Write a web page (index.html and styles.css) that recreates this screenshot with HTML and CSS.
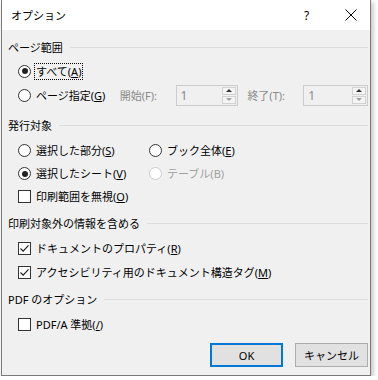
FILE: index.html
```html
<!DOCTYPE html>
<html lang="ja">

<head>
    <meta charset="UTF-8">
    <meta name="viewport" content="width=device-width, initial-scale=1.0">
    <title>オプション</title>
    <link rel="stylesheet" href="styles.css">
</head>

<body>
    <div class="dialog">
        <div class="titlebar">
            <span class="title">オプション</span>
            <span class="help">?</span>
            <span class="close">
                <svg width="12" height="12" viewBox="0 0 12 12">
                    <path d="M0.5 0.5 L11.5 11.5 M11.5 0.5 L0.5 11.5" stroke="#000" stroke-width="1" fill="none" />
                </svg>
            </span>
        </div>

        <div class="content">
            <!-- ページ範囲 -->
            <div class="legend">ページ範囲</div>
            <div class="group group-range">
                <div class="row">
                    <span class="radio checked"></span>
                    <span class="label focus">すべて(<u>A</u>)</span>
                </div>
                <div class="row">
                    <span class="radio"></span>
                    <span class="label pages">ページ指定(<u>G</u>)</span>
                    <span class="field-label">開始(F):</span>
                    <div class="spin">
                        <span class="spin-value">1</span>
                        <div class="spin-btns">
                            <span class="spin-up"></span>
                            <span class="spin-down"></span>
                        </div>
                    </div>
                    <span class="field-label to">終了(T):</span>
                    <div class="spin spin-last">
                        <span class="spin-value">1</span>
                        <div class="spin-btns">
                            <span class="spin-up"></span>
                            <span class="spin-down"></span>
                        </div>
                    </div>
                </div>
            </div>

            <!-- 発行対象 -->
            <div class="legend legend-2">発行対象</div>
            <div class="group group-target">
                <div class="row">
                    <div class="col">
                        <span class="radio"></span>
                        <span class="label">選択した部分(<u>S</u>)</span>
                    </div>
                    <div class="col">
                        <span class="radio"></span>
                        <span class="label">ブック全体(<u>E</u>)</span>
                    </div>
                </div>
                <div class="row">
                    <div class="col">
                        <span class="radio checked"></span>
                        <span class="label">選択したシート(<u>V</u>)</span>
                    </div>
                    <div class="col">
                        <span class="radio disabled"></span>
                        <span class="label disabled-text">テーブル(B)</span>
                    </div>
                </div>
                <div class="row">
                    <span class="check"></span>
                    <span class="label">印刷範囲を無視(<u>O</u>)</span>
                </div>
            </div>

            <!-- 印刷対象外の情報を含める -->
            <div class="legend legend-3">印刷対象外の情報を含める</div>
            <div class="group group-info">
                <div class="row">
                    <span class="check checked">
                        <svg width="11" height="11" viewBox="0 0 11 11">
                            <path d="M1.5 5.5 L4.2 8.2 L9.5 2.3" stroke="#222" stroke-width="1.2" fill="none" />
                        </svg>
                    </span>
                    <span class="label">ドキュメントのプロパティ(<u>R</u>)</span>
                </div>
                <div class="row">
                    <span class="check checked">
                        <svg width="11" height="11" viewBox="0 0 11 11">
                            <path d="M1.5 5.5 L4.2 8.2 L9.5 2.3" stroke="#222" stroke-width="1.2" fill="none" />
                        </svg>
                    </span>
                    <span class="label">アクセシビリティ用のドキュメント構造タグ(<u>M</u>)</span>
                </div>
            </div>

            <!-- PDF のオプション -->
            <div class="legend legend-4">PDF のオプション</div>
            <div class="group group-pdf">
                <div class="row">
                    <span class="check"></span>
                    <span class="label">PDF/A 準拠(<u>/</u>)</span>
                </div>
            </div>

            <div class="buttons">
                <button class="btn btn-default">OK</button>
                <button class="btn">キャンセル</button>
            </div>
        </div>
    </div>
</body>

</html>
```

FILE: styles.css
```css
body {
    margin: 0;
    background: #ffffff;
    font-family: "Noto Sans", "Noto Sans CJK JP", sans-serif;
    font-size: 11px;
    color: #000;
}

.dialog {
    width: 368px;
    height: 375px;
    margin-left: 1px;
    border: 1px solid #7a7a7a;
    border-top: none;
    background: #f0f0f0;
    box-shadow: 2px 2px 5px rgba(0, 0, 0, 0.25);
    display: flex;
    flex-direction: column;
}

.titlebar {
    height: 30px;
    background: #fff;
    display: flex;
    align-items: center;
    padding-left: 9px;
}

.title {
    font-size: 11px;
    flex: 1;
}

.help {
    width: 14px;
    font-size: 12px;
    margin-right: 27px;
}

.close {
    width: 12px;
    height: 12px;
    margin-right: 13px;
    display: flex;
}

.content {
    padding: 7px 2px 0 6px;
}

.legend {
    height: 20px;
    display: flex;
    align-items: center;
    white-space: nowrap;
}

.legend::after {
    content: '';
    flex: 1;
    height: 1px;
    background: #dcdcdc;
    margin-left: 7px;
}

.legend-2 {
    margin-top: 8px;
}

.legend-3 {
    margin-top: 5px;
}

.legend-4 {
    margin-top: 5px;
}

.group {
    padding-left: 9px;
}

.group-range {
    margin-top: 2px;
}

.group-target {
    margin-top: 4px;
}

.group-info,
.group-pdf {
    margin-top: 3px;
}

.row {
    height: 24px;
    display: flex;
    align-items: center;
    white-space: nowrap;
}

.group-target .row {
    height: 23px;
}

.col {
    display: flex;
    align-items: center;
    width: 131px;
}

.radio {
    width: 11px;
    height: 11px;
    border: 1px solid #333;
    border-radius: 50%;
    background: #fff;
    position: relative;
    flex-shrink: 0;
    margin-left: 1px;
}

.radio.checked::after {
    content: '';
    position: absolute;
    left: 2.5px;
    top: 2.5px;
    width: 6px;
    height: 6px;
    border-radius: 50%;
    background: #222;
}

.radio.disabled {
    border-color: #cccccc;
}

.check {
    width: 11px;
    height: 11px;
    border: 1px solid #333;
    background: #fff;
    flex-shrink: 0;
    display: flex;
    margin-left: 1px;
}

.label {
    margin-left: 3px;
    padding: 0 1px;
    line-height: 15px;
    border: 1px solid transparent;
}

.label.focus {
    border: 1px dotted #000;
}

.label.pages {
    width: 82px;
}

.disabled-text {
    color: #a0a0a0;
}

.field-label {
    color: #8a8a8a;
    width: 56px;
}

.to {
    margin-left: 9px;
}

.spin {
    width: 61px;
    height: 19px;
    border: 1px solid #cccccc;
    background: #f0f0f0;
    display: flex;
    align-items: center;
}

.spin-last {
    width: 63px;
}

.spin-value {
    flex: 1;
    padding-left: 4px;
    color: #8a8a8a;
    font-size: 12px;
}

.spin-btns {
    width: 14px;
    height: 17px;
    margin-right: 1px;
    display: flex;
    flex-direction: column;
    gap: 1px;
}

.spin-up,
.spin-down {
    flex: 1;
    border: 1px solid #d2d2d2;
    background: #f4f4f4;
    display: flex;
    align-items: center;
    justify-content: center;
}

.spin-up::after {
    content: '';
    border-left: 3px solid transparent;
    border-right: 3px solid transparent;
    border-bottom: 3px solid #333;
}

.spin-down::after {
    content: '';
    border-left: 3px solid transparent;
    border-right: 3px solid transparent;
    border-top: 3px solid #a0a0a0;
}

.buttons {
    display: flex;
    justify-content: flex-end;
    gap: 12px;
    margin-top: 7px;
    padding-right: 0;
}

.btn {
    width: 73px;
    height: 24px;
    background: #e1e1e1;
    border: 1px solid #adadad;
    font-family: "Noto Sans", "Noto Sans CJK JP", sans-serif;
    font-size: 11px;
    color: #000;
    padding: 0;
}

.btn-default {
    border: 2px solid #0078d7;
}
```
